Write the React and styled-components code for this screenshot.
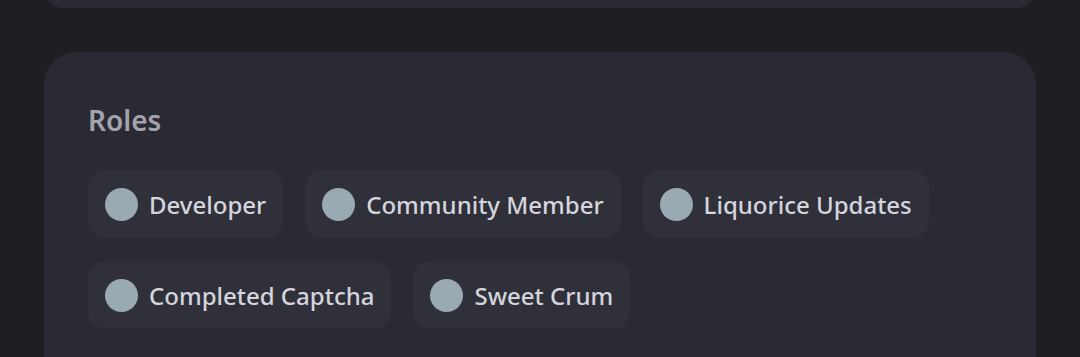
import React from "react";
import styled, { createGlobalStyle } from "styled-components";

const Global = createGlobalStyle`
  html, body { margin: 0; padding: 0; background: #1e1f22; }
  body { font-family: "Noto Sans", "Open Sans", sans-serif; overflow: hidden; }
`;

const Page = styled.div`
  width: 1080px;
  height: 357px;
  overflow: hidden;
  display: flex;
  flex-direction: column;
  gap: 44px;
  padding: 0 44px;
  box-sizing: border-box;
`;

const TopCard = styled.div`
  height: 40px;
  margin-top: -32px;
  flex-shrink: 0;
  background: #292a33;
  border-radius: 32px;
`;

const Card = styled.section`
  flex-shrink: 0;
  background: #292a33;
  border-radius: 32px;
  padding: 50px 44px 60px 44px;
`;

const Heading = styled.h2`
  margin: 0 0 32px 0;
  font-size: 28px;
  line-height: 36px;
  font-weight: 600;
  color: #a2a3ac;
`;

const RoleList = styled.div`
  display: flex;
  flex-wrap: wrap;
  gap: 23px 22px;
`;

const Chip = styled.div`
  display: flex;
  align-items: center;
  gap: 11px;
  height: 68px;
  padding: 0 17px;
  box-sizing: border-box;
  background: #2f3039;
  border-radius: 17px;
`;

const Dot = styled.span`
  width: 33px;
  height: 33px;
  border-radius: 50%;
  background: ${(p) => p.color};
  flex-shrink: 0;
`;

const Name = styled.span`
  font-size: 24px;
  font-weight: 500;
  color: #d4d5dd;
  white-space: nowrap;
`;

const roles = [
  "Developer",
  "Community Member",
  "Liquorice Updates",
  "Completed Captcha",
  "Sweet Crum",
];

export default function App() {
  return (
    <>
      <Global />
      <Page>
        <TopCard />
        <Card>
          <Heading>Roles</Heading>
          <RoleList>
            {roles.map((r) => (
              <Chip key={r}>
                <Dot color="#9aaab3" />
                <Name>{r}</Name>
              </Chip>
            ))}
          </RoleList>
        </Card>
      </Page>
    </>
  );
}
